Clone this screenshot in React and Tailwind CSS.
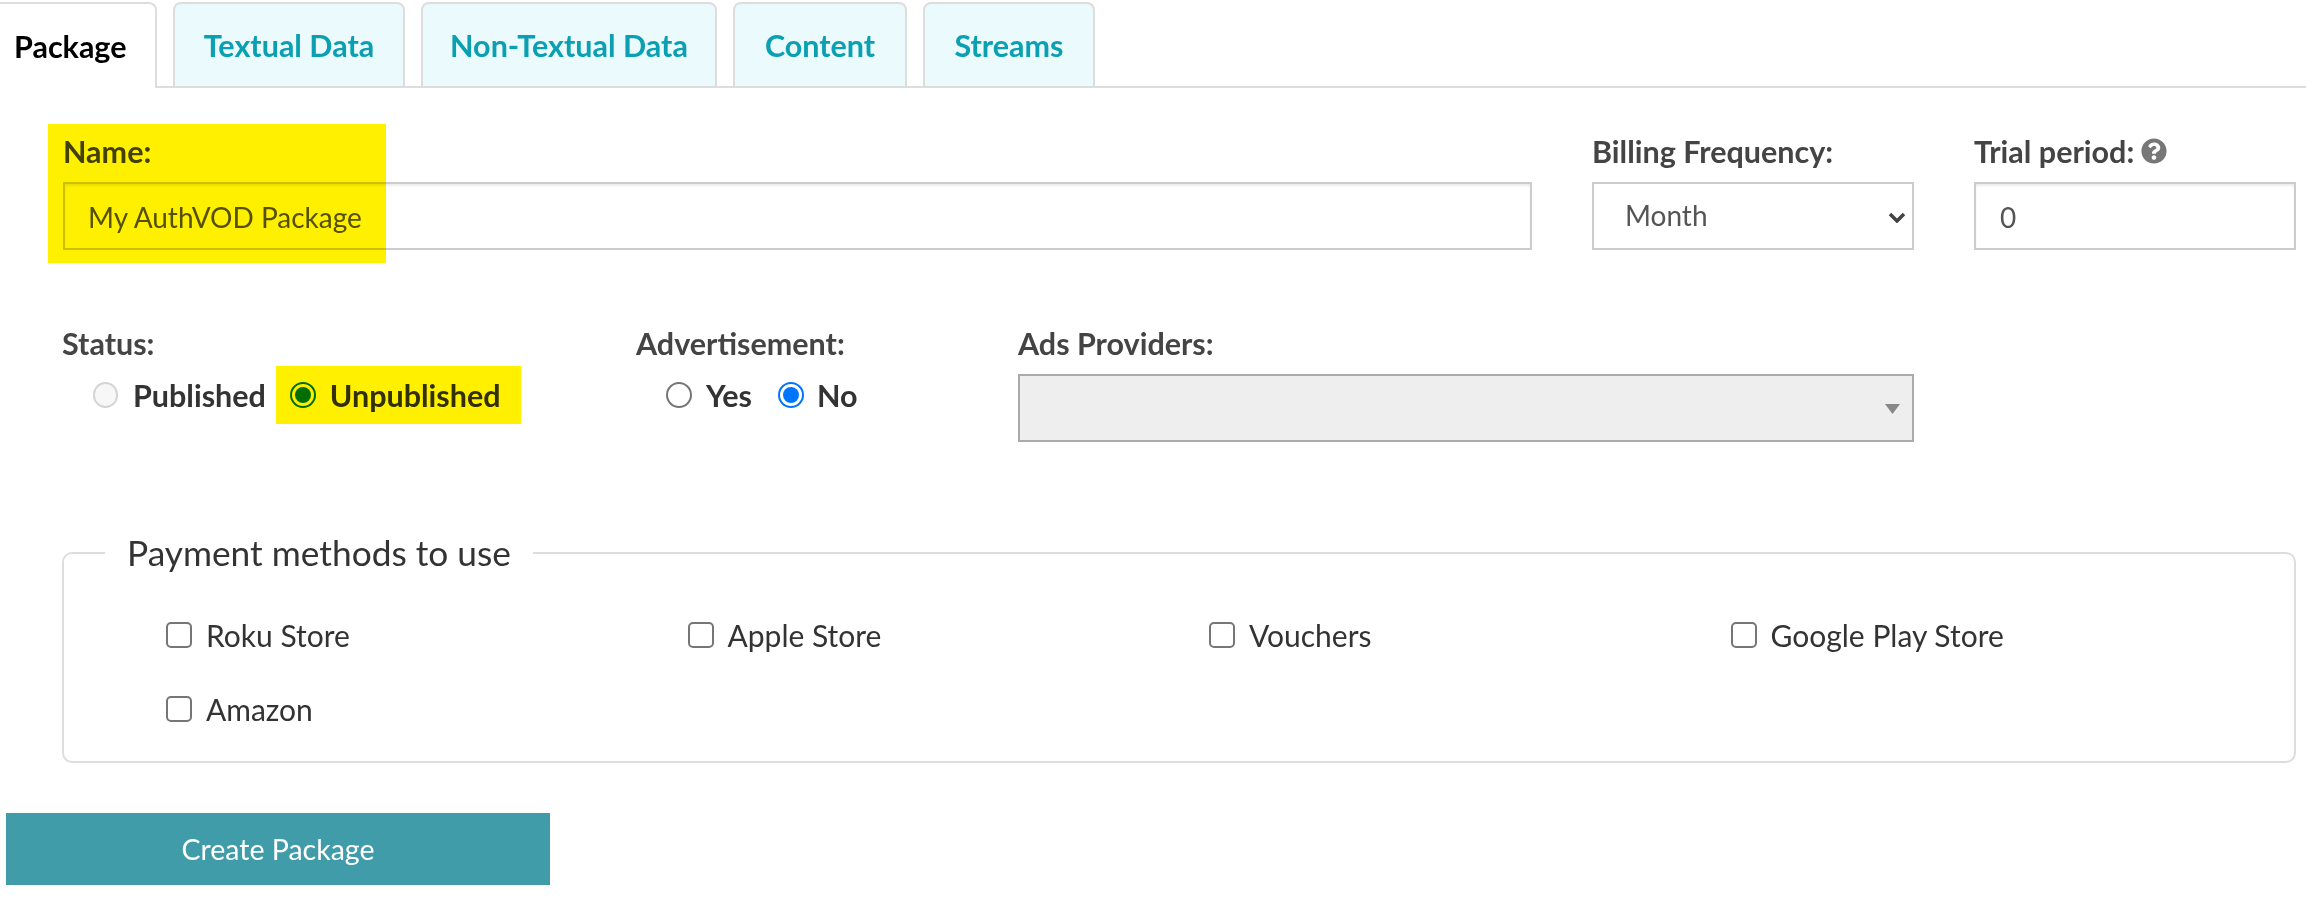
import { FaQuestionCircle } from 'react-icons/fa';

const tabs = ['Textual Data', 'Non-Textual Data', 'Content', 'Streams'];
const tabWidths = ['w-[232px]', 'w-[296px]', 'w-[174px]', 'w-[172px]'];
const methods = ['Roku Store', 'Apple Store', 'Vouchers', 'Google Play Store', 'Amazon'];

function Radio({ checked, disabled }) {
  if (disabled) {
    return <span className="w-[25px] h-[26px] rounded-full border-2 border-[#d4d4d4] bg-[#f7f7f7] shrink-0" />;
  }
  if (checked) {
    return (
      <span className="w-[26px] h-[26px] rounded-full border-2 border-[#0075ff] bg-white flex items-center justify-center shrink-0">
        <span className="w-[16px] h-[16px] rounded-full bg-[#0075ff]" />
      </span>
    );
  }
  return <span className="w-[26px] h-[26px] rounded-full border-2 border-[#767676] bg-white shrink-0" />;
}

function Highlight({ className }) {
  return <span className={`absolute bg-[#fff000] mix-blend-multiply pointer-events-none ${className}`} />;
}

export default function App() {
  return (
    <div className="w-[2306px] h-[904px] bg-white overflow-hidden font-['Lato','Liberation_Sans',sans-serif] text-[28px]">
      {/* Tabs */}
      <div className="flex h-[88px] pt-[2px] border-b-2 border-[#ddd]">
        <div className="w-[157px] h-[86px] -mb-[2px] pl-[14px] pt-[25px] bg-white border-t-2 border-r-2 border-[#ddd] rounded-tr-[8px] font-bold text-[30.5px] text-black leading-[34px]">
          Package
        </div>
        <div className="flex gap-[16px] ml-[16px]">
          {tabs.map((tab, i) => (
            <div
              key={tab}
              className={`${tabWidths[i]} h-[84px] flex justify-center pt-[24px] bg-[#ebfbfd] border-2 border-b-0 border-[#ddd] rounded-t-[8px] font-bold text-[30.5px] text-[#0aa0b2] leading-[34px]`}>
              {tab}
            </div>
          ))}
        </div>
      </div>

      {/* Name, billing, trial */}
      <div className="flex pl-[63px] pt-[46px]">
        <div className="relative w-[1469px]">
          <p className="font-bold text-[30.5px] text-[#444] leading-[34px] mb-[14px]">Name:</p>
          <input
            readOnly
            value="My AuthVOD Package"
            className="w-full h-[68px] pl-[23px] pt-[2px] border-2 border-[#ccc] shadow-[inset_0_2px_2px_rgba(0,0,0,0.08)] text-[#555] outline-none"
          />
          <Highlight className="-left-[15px] -top-[10px] w-[338px] h-[139px]" />
        </div>

        <div className="w-[322px] ml-[60px]">
          <p className="font-bold text-[30.5px] text-[#444] leading-[34px] mb-[14px]">Billing Frequency:</p>
          <div className="relative">
            <select className="w-full h-[68px] pl-[31px] pb-[2px] border-2 border-[#ccc] bg-white appearance-none text-[#555] outline-none">
              <option>Month</option>
            </select>
            <svg className="absolute right-[8px] top-[30px] w-[18px] h-[11px]" viewBox="0 0 18 11">
              <path d="M2 2l7 7 7-7" fill="none" stroke="#444" strokeWidth="3.5" />
            </svg>
          </div>
        </div>

        <div className="w-[322px] ml-[60px]">
          <p className="flex items-center gap-[7px] font-bold text-[30.5px] text-[#444] leading-[34px] mb-[14px]">
            Trial period:
            <FaQuestionCircle className="w-[26px] h-[26px] text-[#777]" />
          </p>
          <input
            readOnly
            value="0"
            className="w-full h-[68px] pl-[24px] pt-[2px] border-2 border-[#ccc] shadow-[inset_0_2px_2px_rgba(0,0,0,0.08)] text-[#555] outline-none"
          />
        </div>
      </div>

      {/* Status, advertisement, ads providers */}
      <div className="flex pl-[62px] mt-[76px]">
        <div className="w-[574px]">
          <p className="font-bold text-[30.5px] text-[#444] leading-[34px]">Status:</p>
          <div className="flex items-center pl-[31px] mt-[18px] font-bold text-[30.5px] text-[#333] leading-[34px]">
            <span className="flex items-center gap-[15px]">
              <Radio disabled />
              Published
            </span>
            <span className="relative flex items-center gap-[14px] ml-[24px]">
              <Radio checked />
              Unpublished
              <Highlight className="-left-[14px] -right-[20px] -top-[12px] -bottom-[12px]" />
            </span>
          </div>
        </div>

        <div className="w-[382px]">
          <p className="font-bold text-[30.5px] text-[#444] leading-[34px]">Advertisement:</p>
          <div className="flex items-center pl-[30px] mt-[18px] font-bold text-[30.5px] text-[#333] leading-[34px]">
            <span className="flex items-center gap-[14px]">
              <Radio />
              Yes
            </span>
            <span className="flex items-center gap-[13px] ml-[26px]">
              <Radio checked />
              No
            </span>
          </div>
        </div>

        <div className="w-[896px]">
          <p className="font-bold text-[30.5px] text-[#444] leading-[34px] mb-[14px]">Ads Providers:</p>
          <div className="h-[68px] flex items-center justify-end pr-[12px] pt-[2px] bg-[#eee] border-2 border-[#aaa]">
            <svg className="w-[15px] h-[10px]" viewBox="0 0 15 10">
              <path d="M0 0h15L7.5 10z" fill="#888" />
            </svg>
          </div>
        </div>
      </div>

      {/* Payment methods */}
      <fieldset className="ml-[62px] w-[2234px] h-[230px] mt-[91px] border-2 border-[#ddd] rounded-[10px]">
        <legend className="ml-[41px] px-[22px] text-[35.3px] leading-[40px] text-[#333]">Payment methods to use</legend>
        <div className="grid grid-cols-[repeat(4,521.5px)] gap-y-[40px] pl-[102px] pt-[45px]">
          {methods.map((method) => (
            <label key={method} className="flex items-center gap-[14px] h-[34px] text-[30px] text-[#333]">
              <span className="w-[26px] h-[26px] rounded-[5px] border-2 border-[#767676] bg-white shrink-0" />
              {method}
            </label>
          ))}
        </div>
      </fieldset>

      <button className="block ml-[6px] mt-[50px] w-[544px] h-[72px] bg-[#419ca9] text-white text-[28.5px]">
        Create Package
      </button>
    </div>
  );
}
